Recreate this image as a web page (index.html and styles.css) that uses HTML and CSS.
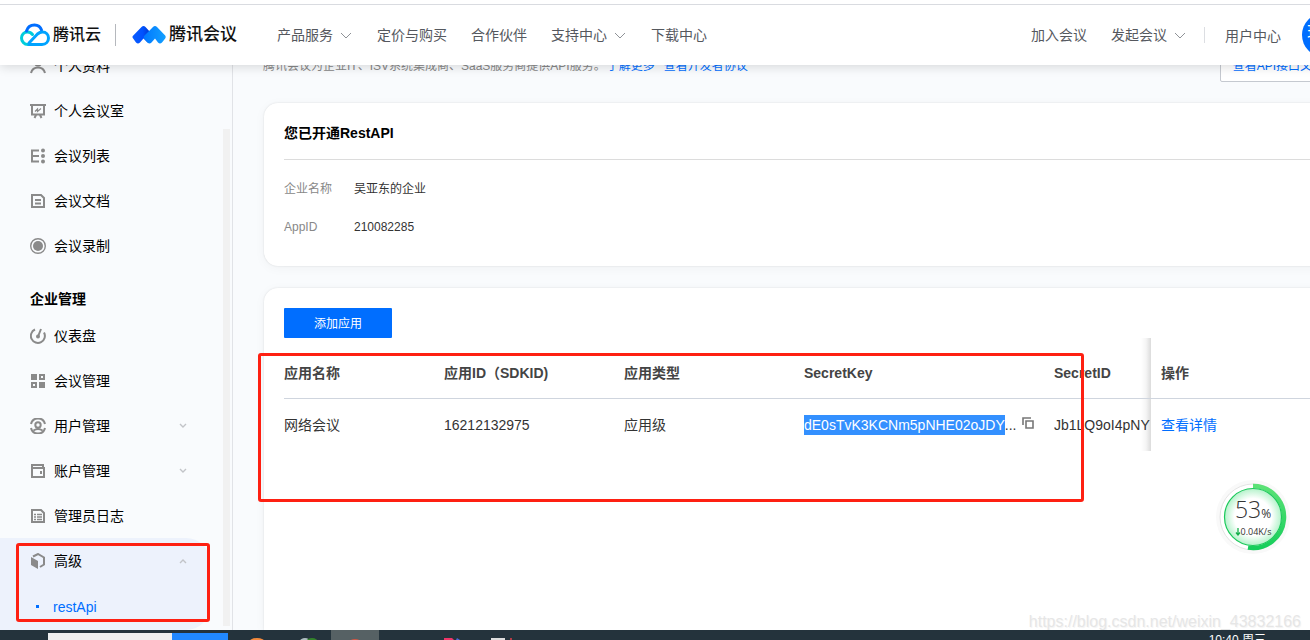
FILE: index.html
```html
<!DOCTYPE html>
<html lang="zh-CN">
<head>
<meta charset="utf-8">
<title>腾讯会议 - restApi</title>
<link rel="stylesheet" href="styles.css">
</head>
<body>
<header class="topbar">
  <a class="brand" href="#">
    <svg width="30" height="24" viewBox="0 0 30 24" fill="none" stroke-width="3" stroke-linecap="round">
      <path d="M12.5 11.500C11 9.500 9.500 9 7.500 9C4 9 1.500 11.800 1.500 15S4 21.500 8 21.500H11" stroke="#00cddb"/>
      <path d="M6.500 8C7.500 4.500 10.500 2 14.500 2C18 2 20.500 4 21.500 7" stroke="#006eff"/>
      <path d="M9 21.500H22C26 21.500 28.500 18.500 28.500 15S26 9 22.500 9C20.500 9 19 9.700 17.500 11L9 20" stroke="#00a3ff" stroke-linejoin="round"/>
    </svg>
    <span class="brand-cloud">腾讯云</span>
  </a>
  <span class="brand-divider"></span>
  <a class="brand" href="#">
    <svg width="34" height="20" viewBox="0 0 34 20">
      <defs>
        <linearGradient id="peak-left"><stop stop-color="#0a5cff"/><stop offset=".55" stop-color="#0052ff"/><stop offset="1" stop-color="#0036c8"/></linearGradient>
        <linearGradient id="peak-right"><stop stop-color="#0078ff"/><stop offset="1" stop-color="#14a0ff"/></linearGradient>
      </defs>
      <path d="M.8 11L9.500 2Q11.500 0 13.500 2L19 8V17Q17 19 15 17L11.500 13.500L8 17.500Q6 19.500 4 17.500L.8 13Q0 12 .8 11Z" fill="url(#peak-left)"/>
      <path d="M12.500 10.500L21 2Q23 0 25 2L33.200 10.500Q34.200 12 33.200 13.500L30 17.500Q28 19.500 26 17.500L23 13.500L19.500 17.500Q17.500 19.500 15.500 17.500L12.500 14Q11 12 12.500 10.500Z" fill="url(#peak-right)"/>
    </svg>
    <span class="brand-meeting">腾讯会议</span>
  </a>
  <nav class="nav">
    <a href="#">产品服务<svg class="chev" viewBox="0 0 14 10"><path d="M2 3l5 5 5-5"/></svg></a>
    <a href="#">定价与购买</a>
    <a href="#">合作伙伴</a>
    <a href="#">支持中心<svg class="chev" viewBox="0 0 14 10"><path d="M2 3l5 5 5-5"/></svg></a>
    <a href="#">下载中心</a>
  </nav>
  <nav class="nav nav-user">
    <a href="#">加入会议</a>
    <a href="#">发起会议<svg class="chev" viewBox="0 0 14 10"><path d="M2 3l5 5 5-5"/></svg></a>
    <span class="nav-divider"></span>
    <a class="account" href="#">用户中心</a>
    <span class="avatar">现</span>
  </nav>
</header>

<div class="workspace">
  <aside class="sidebar">
    <nav class="menu">
      <a class="item" href="#"><svg class="ico" viewBox="0 0 16 16"><circle cx="8" cy="4.500" r="3"/><path d="M1 15C2 11 5 9.500 8 9.500s6 1.500 7 5.500"/></svg>个人资料</a>
      <a class="item" href="#"><svg class="ico" viewBox="0 0 16 16"><path d="M0 2h16M2 2v9.500h12V2M6 12l-1.500 3M10 12l1.500 3"/><path d="M5 8.500L7.500 6v2.500L11 5.500" stroke-width="1.200"/></svg>个人会议室</a>
      <a class="item" href="#"><svg class="ico" viewBox="0 0 16 16"><path d="M9 2.500H2v11h7M2 8h7"/><g class="solid"><circle cx="13" cy="2.500" r="2"/><circle cx="13" cy="8" r="2"/><circle cx="13" cy="13.500" r="2"/></g></svg>会议列表</a>
      <a class="item" href="#"><svg class="ico" viewBox="0 0 16 16"><path d="M2 2h9l3 3v9H2zM5 7h6M5 10.500h6"/></svg>会议文档</a>
      <a class="item" href="#"><svg class="ico" viewBox="0 0 16 16"><circle cx="8" cy="8" r="7.300" stroke-width="1.400"/><circle class="solid" cx="8" cy="8" r="5"/></svg>会议录制</a>
      <h2 class="menu-title">企业管理</h2>
      <a class="item" href="#"><svg class="ico" viewBox="0 0 16 16"><path d="M5 1.500A7 7 0 1 0 14 4.500M8 8.500L11 1"/><circle class="solid" cx="8" cy="8.500" r="2"/></svg>仪表盘</a>
      <a class="item" href="#"><svg class="ico" viewBox="0 0 16 16"><path class="solid" d="M1 1h6v6H1zM9 9h6v6H9z"/><path d="M10 2h4v4h-4zM2 10h4v4H2z"/></svg>会议管理</a>
      <a class="item" href="#"><svg class="ico" viewBox="0 0 16 16"><path d="M1 6A7.200 7.200 0 0 1 15 6M1 10A7.200 7.200 0 0 0 15 10M3.500 12.500Q8 9.500 12.500 12.500"/><circle cx="8" cy="7" r="2.700"/></svg>用户管理<svg class="fold" viewBox="0 0 8 6"><path d="M1 1l3 3 3-3"/></svg></a>
      <a class="item" href="#"><svg class="ico" viewBox="0 0 16 16"><path d="M2 5V2h11v3M2 5h12v9H2z"/><path class="solid" d="M10 8h2v3h-2z"/></svg>账户管理<svg class="fold" viewBox="0 0 8 6"><path d="M1 1l3 3 3-3"/></svg></a>
      <a class="item" href="#"><svg class="ico" viewBox="0 0 16 16"><path d="M2 2h9l3 3v9H2z"/><path d="M4 6.500h2M7 6.500h5M4 9h2M7 9h5M4 11.500h2M7 11.500h5" stroke-width="1.300"/></svg>管理员日志</a>
      <div class="group-active">
        <a class="item" href="#"><svg class="ico" viewBox="0 0 16 16"><path class="solid" d="M1 4l7 4v8l-7-4z"/><path d="M3 3.500L8 1l6 3.500v7L10 14"/></svg>高级<svg class="fold" viewBox="0 0 8 6"><path d="M1 5l3-3 3 3"/></svg></a>
        <a class="subitem" href="#">restApi</a>
        <span class="mark mark-menu"></span>
      </div>
    </nav>
    <span class="scroll-track"></span>
  </aside>

  <main class="content">
    <div class="intro">
      <p>腾讯会议为企业IT、ISV系统集成商、SaaS服务商提供API服务。<a href="#">了解更多</a><a class="agreement" href="#">查看开发者协议</a></p>
      <button class="doc-button" type="button">查看API接口文档</button>
    </div>

    <section class="card">
      <h1 class="card-title">您已开通RestAPI</h1>
      <dl class="facts">
        <dt>企业名称</dt><dd>吴亚东的企业</dd>
        <dt>AppID</dt><dd>210082285</dd>
      </dl>
    </section>

    <section class="card card-apps">
      <button class="add-button" type="button">添加应用</button>
      <div class="table-wrap">
        <table class="apps">
          <colgroup><col class="c-name"><col class="c-id"><col class="c-type"><col class="c-key"><col class="c-secret"><col></colgroup>
          <thead>
            <tr><th>应用名称</th><th>应用ID（SDKID)</th><th>应用类型</th><th>SecretKey</th><th class="fade">SecretID</th><th class="ops">操作</th></tr>
          </thead>
          <tbody>
            <tr>
              <td>网络会议</td><td>16212132975</td><td>应用级</td>
              <td><div class="key"><span class="selected">dE0sTvK3KCNm5pNHE02oJDY</span>...<button class="copy" type="button" aria-label="复制"><svg width="12" height="12" viewBox="0 0 12 12"><path d="M1 8V1h8M4 4h7v7H4z"/></svg></button></div></td>
              <td class="fade">Jb1LQ9oI4pNY</td>
              <td class="ops"><a href="#">查看详情</a></td>
            </tr>
          </tbody>
        </table>
        <span class="mark mark-table"></span>
      </div>
    </section>
  </main>
</div>

<footer class="taskbar">
  <input class="task-search" type="text" aria-label="搜索">
  <span class="task-blue"></span>
  <span class="task-apps">
    <svg width="300" height="10" viewBox="0 0 300 10">
      <rect x="103" width="48" height="10" fill="#566164"/>
      <ellipse cx="29" cy="12" rx="8" ry="4" fill="#f58a3c"/>
      <ellipse cx="77" cy="11" rx="5" ry="3" fill="#aebdc0"/>
      <ellipse cx="84" cy="12" rx="6" ry="4" fill="#34842c"/>
      <ellipse cx="127" cy="12" rx="6" ry="3" fill="#d05744"/>
      <path d="M216 8h8l2 2h-10z" fill="#ef3568"/><path d="M229 8l3 2h-4z" fill="#4d68d8"/>
      <path d="M263 8h14v2h-14z" fill="#ddd"/><path d="M282 8h2v2h-2z" fill="#b33b45"/>
    </svg>
  </span>
  <time class="clock">10:40 周三</time>
</footer>

<div class="meter">
  <svg class="meter-ring" viewBox="0 0 76 76">
    <defs>
      <radialGradient id="face"><stop offset=".65" stop-color="#fff"/><stop offset="1" stop-color="#b4f2ca"/></radialGradient>
      <linearGradient id="arc" x2="0" y2="1"><stop stop-color="#5be276"/><stop offset="1" stop-color="#16ce5b"/></linearGradient>
    </defs>
    <circle cx="38" cy="38" r="37" fill="#f9f9f9"/>
    <circle cx="38" cy="38" r="33" fill="#fff" stroke="#e4e4e4"/>
    <path d="M38 7a31 31 0 1 1-5 61.600" fill="none" stroke="url(#arc)" stroke-width="4.500"/>
    <circle cx="38" cy="38" r="28.500" fill="url(#face)" stroke="#1bc95a" stroke-width="1.200"/>
  </svg>
  <span class="meter-value">53<small>%</small></span>
  <span class="meter-rate"><svg width="6" height="8" viewBox="0 0 6 8"><path d="M3 0v6M1 4.500l2 2.500 2-2.500" fill="none" stroke="#15b04a" stroke-width="1.300"/></svg>0.04K/s</span>
</div>
<span class="watermark">https://blog.csdn.net/weixin_43832166</span>
</body>
</html>
```
FILE: styles.css
```css
* { box-sizing: border-box; }
body {
  margin: 0;
  height: 100vh;
  display: flex;
  flex-direction: column;
  overflow: hidden;
  position: relative;
  background: #f9fbfd;
  color: #000;
  font: 14px/20px "Liberation Sans", "Noto Sans CJK SC", sans-serif;
}
a { color: #006eff; text-decoration: none; }
button { font: inherit; cursor: pointer; }
h1, h2, p, dl, dd { margin: 0; }

.topbar {
  flex: none;
  display: flex;
  align-items: center;
  height: 65px;
  padding: 0 0 0 20px;
  margin-right: -36px;
  border-top: 4px solid #fff;
  background: linear-gradient(#d9dbe0 1px, #fff 1px);
  box-shadow: 0 2px 10px rgba(0, 0, 0, .14);
  position: relative;
  z-index: 2;
}
.brand { display: flex; align-items: center; gap: 3px; color: #111; font-weight: 500; white-space: nowrap; }
.brand-cloud { font-size: 16px; }
.brand-meeting { font-size: 17px; }
.brand-divider { width: 1px; height: 22px; margin: 0 16px 0 14px; background: #b5b8bd; }
.nav { display: flex; align-items: center; gap: 24px; margin-left: 40px; white-space: nowrap; }
.nav a { display: flex; align-items: center; color: #55585e; }
.nav .account { padding-top: 3px; }
.nav-user { margin-left: auto; }
.chev { width: 14px; height: 10px; margin-left: 6px; fill: none; stroke: #8f9297; }
.nav-divider { width: 1px; height: 16px; margin-right: -4px; margin-left: -7px; background: #dcdee2; }
.avatar {
  width: 44px;
  height: 44px;
  margin-left: -3px;
  padding-left: 5px;
  border-radius: 50%;
  background: #006eff;
  color: #fff;
  font-size: 16px;
  line-height: 40px;
}

.workspace { flex: 1; min-height: 0; display: flex; overflow: hidden; }
.sidebar { flex: none; width: 233px; border-right: 1px solid #e1e3e7; position: relative; }
.menu { margin-top: -22px; }
.item { display: flex; align-items: center; gap: 8px; height: 45px; padding: 0 45px 0 30px; color: #000; }
.ico { width: 16px; height: 16px; fill: none; stroke: #8a8a8a; stroke-width: 2; }
.ico .solid { fill: #8a8a8a; stroke: none; }
.fold { width: 8px; height: 6px; margin-left: auto; fill: none; stroke: #c2c4c8; stroke-width: 1.4; }
.menu-title { padding: 21px 30px 4px; font-size: 14px; font-weight: 700; }
.group-active { width: 210px; border-radius: 0 24px 24px 0; background: #edf2fc; position: relative; }
.group-active .item { padding-right: 23px; }
.subitem { display: flex; align-items: center; height: 47px; padding-left: 36px; gap: 14px; }
.subitem::before { content: ""; width: 3px; height: 3px; background: #006eff; }
.scroll-track { position: absolute; top: 64px; right: 2px; bottom: 4px; width: 7px; background: #f1f1f1; }

.mark { position: absolute; border: 3px solid #fe2012; border-radius: 3px; pointer-events: none; }
.mark-menu { inset: 5px 0 8px 16px; }
.mark-table { top: 15px; left: -26px; width: 826px; height: 149px; }

.content { flex: 1; min-width: 0; display: flex; flex-direction: column; padding-left: 31px; margin-right: -27px; }
.intro { display: flex; justify-content: space-between; align-items: center; margin: -15px 0 21px; font-size: 12px; color: #888; white-space: nowrap; }
.intro p { margin-left: -1px; }
.intro a { margin-left: 1px; }
.intro .agreement { margin-left: 9px; }
.doc-button { height: 32px; padding: 0 12px; border: 1px solid #c5c9d0; border-radius: 2px; background: #fff; color: #006eff; }

.card { padding: 20px; border-radius: 14px; background: #fff; box-shadow: 0 0 2px rgba(0, 0, 0, .12), 0 2px 12px rgba(0, 0, 0, .04); }
.card-title { padding-bottom: 16px; border-bottom: 1px solid #dcdcdc; font-size: 14px; line-height: 20px; }
.facts { display: grid; grid-template-columns: 70px 1fr; row-gap: 20px; padding: 20px 0 10px; font-size: 12px; line-height: 18px; }
.facts dt { color: #888; }
.facts dd { color: #333; }

.card-apps { flex: 1; margin-top: 22px; border-radius: 14px 14px 0 0; }
.add-button { display: block; width: 108px; height: 30px; padding: 1px 0 0; border: 0; border-radius: 1px; background: #006eff; color: #fff; font-size: 12px; }
.table-wrap { position: relative; }
.apps { width: 100%; table-layout: fixed; border-collapse: separate; border-spacing: 0; color: #333; white-space: nowrap; }
.c-name { width: 160px; }
.c-id, .c-type { width: 180px; }
.c-key { width: 250px; }
.c-secret { width: 97px; }
.apps th { height: 61px; padding: 10px 0 0; border-bottom: 1px solid #cfd5de; text-align: left; vertical-align: top; line-height: 50px; color: #444; }
.apps td { height: 52px; padding: 0; }
.apps .ops { padding-left: 10px; }
.fade { overflow: hidden; background: linear-gradient(to left, rgba(0, 0, 0, .14), rgba(0, 0, 0, .04) 5px, transparent 10px); }
.key { display: flex; }
.selected { background: #3390ff; color: #fff; }
.copy { align-self: flex-start; margin-left: 6px; padding: 2px 0 0; border: 0; background: none; }
.copy svg { display: block; fill: none; stroke: #777; stroke-width: 1.6; }

.taskbar { flex: none; display: flex; height: 10px; overflow: hidden; padding-left: 48px; background: #24333c; position: relative; z-index: 1; }
.task-search { width: 124px; height: 20px; margin-top: 3px; padding: 0; border: 0; background: #eee; }
.task-blue { width: 56px; margin-top: 3px; background: #2188ff; }
.task-apps { display: flex; }
.clock { margin: 2px 44px 0 auto; color: #fff; font-size: 12px; line-height: 16px; }

.meter { position: absolute; right: 19px; bottom: 85px; width: 76px; height: 76px; display: flex; flex-direction: column; align-items: center; padding-top: 18px; color: #333; font-family: "Open Sans", sans-serif; }
.meter-ring { position: absolute; inset: 0; }
.meter-value { position: relative; font-size: 23px; font-weight: 300; line-height: 24px; }
.meter-value small { font-size: 12px; font-weight: 400; }
.meter-rate { position: relative; display: flex; align-items: center; font-size: 9px; line-height: 12px; }
.watermark { position: absolute; right: 9px; bottom: 8px; color: #e6e6e6; font-size: 16px; line-height: 20px; text-shadow: 1px 1px 1px #f4f4f4; }
```
